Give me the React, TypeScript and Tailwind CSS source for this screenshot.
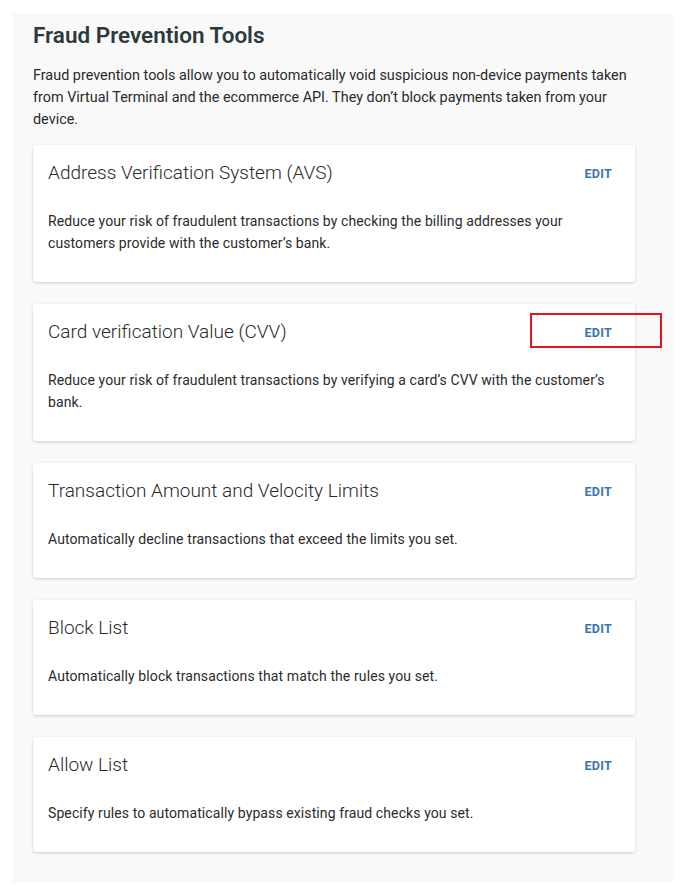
const TOOLS = [
  {
    title: "Address Verification System (AVS)",
    text: "Reduce your risk of fraudulent transactions by checking the billing addresses your customers provide with the customer’s bank.",
  },
  {
    title: "Card verification Value (CVV)",
    text: "Reduce your risk of fraudulent transactions by verifying a card’s CVV with the customer’s bank.",
    highlight: true,
  },
  {
    title: "Transaction Amount and Velocity Limits",
    text: "Automatically decline transactions that exceed the limits you set.",
  },
  {
    title: "Block List",
    text: "Automatically block transactions that match the rules you set.",
  },
  {
    title: "Allow List",
    text: "Specify rules to automatically bypass existing fraud checks you set.",
  },
];

function ToolCard({ title, text, highlight }: { title: string; text: string; highlight?: boolean }) {
  return (
    <div className="relative w-[602px] rounded-[3px] bg-white pl-[15px] pr-[23px] pt-[16px] pb-[28px] shadow-[0_1px_3px_rgba(0,0,0,0.18)]">
      <div className="flex items-center justify-between">
        <h3 className="text-[19px] leading-[24px] font-light text-[#2a2a2a]">{title}</h3>
        <button className="mt-[3px] text-[12.5px] font-bold tracking-[0.3px] text-[#3a74b5]">EDIT</button>
      </div>
      <p className="mt-[25px] mr-[-15px] text-[14px] leading-[22px] tracking-[0.1px] text-[#2b2b2b]">{text}</p>
      {/* highlight box from the annotated screenshot */}
      {highlight && (
        <div className="absolute left-[497px] top-[9px] h-[35px] w-[132px] border-2 border-[#e3141b]" />
      )}
    </div>
  );
}

export default function App() {
  return (
    <div className="min-h-[891px] bg-white pl-[13px] pt-[13px] font-['Roboto',sans-serif]">
      <section className="h-[870px] w-[660px] bg-[#f9f9f9] pl-[20px] pt-[8px]">
        <h2 className="text-[22.5px] leading-[28px] font-semibold text-[#2c3a3d]">Fraud Prevention Tools</h2>
        <p className="mt-[16px] w-[605px] text-[14.4px] leading-[22px] text-[#2b2b2b]">
          Fraud prevention tools allow you to automatically void suspicious non-device payments taken from Virtual
          Terminal and the ecommerce API. They don’t block payments taken from your device.
        </p>
        <div className="mt-[14px] flex flex-col gap-[22px]">
          {TOOLS.map((tool) => (
            <ToolCard key={tool.title} {...tool} />
          ))}
        </div>
      </section>
    </div>
  );
}
